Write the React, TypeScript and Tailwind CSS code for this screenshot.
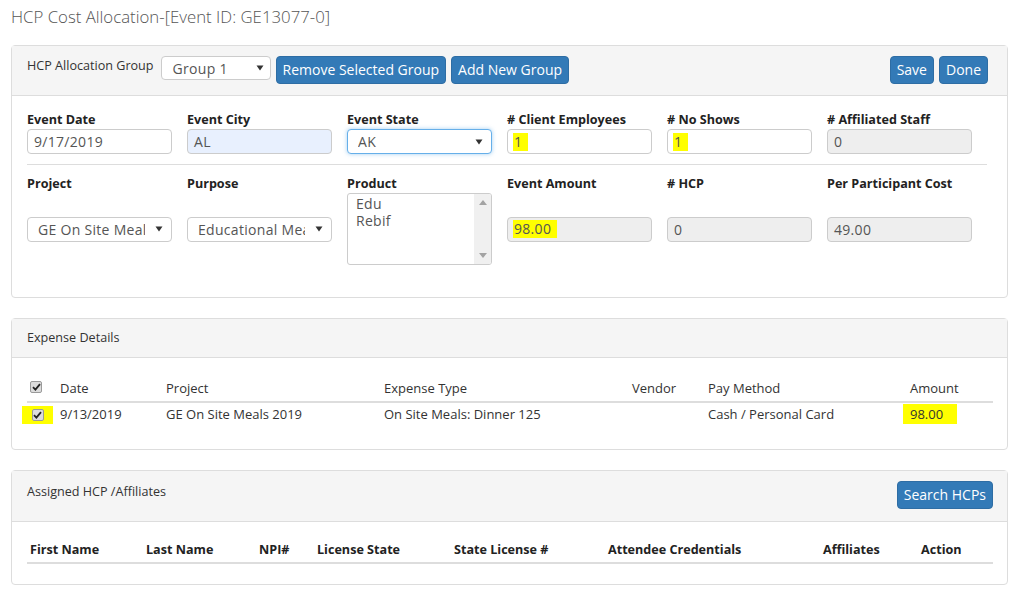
import React from "react";

const Arrow = () => (
  <svg width="8" height="6" viewBox="0 0 8 6" className="shrink-0">
    <path d="M0.5 0.5 L7.5 0.5 L4 5.5 Z" fill="#333" />
  </svg>
);

const Check = ({ hl }: { hl?: boolean }) => (
  <span className={`inline-flex items-center justify-center ${hl ? "bg-[#ffff00] w-[31px] h-[18px]" : ""}`}>
    <span className="w-[12px] h-[12px] border border-[#9a9a9a] rounded-[2px] bg-[#dcdcdc] flex items-center justify-center">
      <svg width="9" height="8" viewBox="0 0 9 8">
        <path d="M1 4.2 L3.4 6.6 L8 1.2" stroke="#222" strokeWidth="1.8" fill="none" />
      </svg>
    </span>
  </span>
);

const Btn = ({ children, className = "" }: { children: React.ReactNode; className?: string }) => (
  <button className={`bg-[#337ab7] border border-[#2e6da4] text-white rounded-[4px] h-[28px] px-[6px] text-[14px] leading-none ${className}`}>
    {children}
  </button>
);

const Label = ({ children }: { children: React.ReactNode }) => (
  <div className="text-[12.6px] font-bold text-[#222] leading-[18px] h-[18px] whitespace-nowrap">{children}</div>
);

const Input = ({ value, variant = "normal", hl }: { value: string; variant?: "normal" | "ro" | "auto"; hl?: boolean }) => {
  const bg = variant === "ro" ? "bg-[#eeeeee]" : variant === "auto" ? "bg-[#e8f0fe]" : "bg-white";
  return (
    <div className={`w-[145px] h-[25px] border border-[#cccccc] rounded-[4px] ${bg} flex items-center px-[6px] text-[14px] tracking-[0.3px] text-[#555]`}>
      {hl ? <span className="bg-[#ffff00] px-[1px] -ml-[1px] h-[18px] leading-[18px] inline-block pr-[6px]">{value}</span> : value}
    </div>
  );
};

const Select = ({ value, focus }: { value: string; focus?: boolean }) => (
  <div
    className={`w-[145px] h-[25px] rounded-[4px] bg-white flex items-center pl-[10px] pr-[8px] text-[14px] tracking-[0.3px] text-[#555] ${
      focus ? "border border-[#66afe9] shadow-[0_0_4px_rgba(102,175,233,0.6)]" : "border border-[#cccccc]"
    }`}
  >
    <span className="flex-1 overflow-hidden whitespace-nowrap mr-[10px]">{value}</span>
    <Arrow />
  </div>
);

export default function App() {
  return (
    <div className="font-['Open_Sans','Noto_Sans',sans-serif] text-[#333] bg-white w-[1019px] h-[603px] overflow-hidden">
      <div className="pl-[11px] pt-[4px] h-[45px]">
        <h1 className="text-[16.8px] font-light text-[#555] leading-[26px]">HCP Cost Allocation-[Event ID: GE13077-0]</h1>
      </div>

      <div className="mx-[11px] w-[997px]">
        {/* Panel 1 */}
        <div className="border border-[#dddddd] rounded-[4px]">
          <div className="bg-[#f5f5f5] border-b border-[#dddddd] h-[50px] pl-[15px] pr-[19px] pt-[10px] flex items-start">
            <span className="text-[12.6px] text-[#333] mt-[1px] leading-[18px]">HCP Allocation Group</span>
            <div className="ml-[7px] w-[110px] h-[24px] border border-[#cccccc] rounded-[4px] bg-white flex items-center pl-[11px] pr-[6px] text-[14px] tracking-[0.3px] text-[#555]">
              <span className="flex-1">Group 1</span>
              <Arrow />
            </div>
            <Btn className="ml-[5px]">Remove Selected Group</Btn>
            <Btn className="ml-[5px]">Add New Group</Btn>
            <div className="flex-1" />
            <Btn>Save</Btn>
            <Btn className="ml-[5px]">Done</Btn>
          </div>
          <div className="px-[15px] pt-[15px] pb-[32px]">
            <div className="grid grid-cols-[160px_160px_160px_160px_160px_160px]">
              <div><Label>Event Date</Label><Input value="9/17/2019" /></div>
              <div><Label>Event City</Label><Input value="AL" variant="auto" /></div>
              <div><Label>Event State</Label><Select value="AK" focus /></div>
              <div><Label># Client Employees</Label><Input value="1" hl /></div>
              <div><Label># No Shows</Label><Input value="1" hl /></div>
              <div><Label># Affiliated Staff</Label><Input value="0" variant="ro" /></div>
            </div>
            <div className="border-t border-[#dddddd] mt-[10px] mb-[10px] w-[960px]" />
            <div className="grid grid-cols-[160px_160px_160px_160px_160px_160px]">
              <div><Label>Project</Label><div className="h-[72px] flex items-center"><Select value="GE On Site Meals 2019" /></div></div>
              <div><Label>Purpose</Label><div className="h-[72px] flex items-center"><Select value="Educational Meals" /></div></div>
              <div>
                <Label>Product</Label>
                <div className="w-[145px] h-[72px] border border-[#cccccc] rounded-[3px] bg-white flex overflow-hidden">
                  <div className="flex-1 pl-[8px] pt-[1px] text-[14px] tracking-[0.3px] text-[#555] leading-[17px]">
                    <div>Edu</div>
                    <div>Rebif</div>
                  </div>
                  <div className="w-[17px] bg-[#f0f0f0] flex flex-col justify-between items-center py-[6px]">
                    <svg width="8" height="5" viewBox="0 0 8 5"><path d="M0 5 L4 0 L8 5 Z" fill="#a3a3a3" /></svg>
                    <svg width="8" height="5" viewBox="0 0 8 5"><path d="M0 0 L4 5 L8 0 Z" fill="#a3a3a3" /></svg>
                  </div>
                </div>
              </div>
              <div><Label>Event Amount</Label><div className="h-[72px] flex items-center"><Input value="98.00" variant="ro" hl /></div></div>
              <div><Label># HCP</Label><div className="h-[72px] flex items-center"><Input value="0" variant="ro" /></div></div>
              <div><Label>Per Participant Cost</Label><div className="h-[72px] flex items-center"><Input value="49.00" variant="ro" /></div></div>
            </div>
          </div>
        </div>

        {/* Panel 2 */}
        <div className="border border-[#dddddd] rounded-[4px] mt-[20px]">
          <div className="bg-[#f5f5f5] border-b border-[#dddddd] h-[39px] pl-[15px] flex items-center">
            <span className="text-[12.6px] text-[#333]">Expense Details</span>
          </div>
          <div className="px-[15px] pt-[21px] pb-[22px]">
            <table className="w-[966px] text-[13px] text-[#333] border-collapse">
              <thead>
                <tr className="border-b-2 border-[#dddddd]">
                  <th className="font-normal text-left w-[33px] pl-[3px] h-[23px] align-top"><span className="relative -top-[2px]"><Check /></span></th>
                  <th className="font-normal text-left w-[106px] align-top">Date</th>
                  <th className="font-normal text-left w-[218px] align-top">Project</th>
                  <th className="font-normal text-left w-[248px] align-top">Expense Type</th>
                  <th className="font-normal text-left w-[76px] align-top">Vendor</th>
                  <th className="font-normal text-left w-[202px] align-top">Pay Method</th>
                  <th className="font-normal text-left align-top">Amount</th>
                </tr>
              </thead>
              <tbody>
                <tr>
                  <td className="h-[25px]"><span className="-ml-[5px] inline-flex"><Check hl /></span></td>
                  <td>9/13/2019</td>
                  <td>GE On Site Meals 2019</td>
                  <td>On Site Meals: Dinner 125</td>
                  <td></td>
                  <td>Cash / Personal Card</td>
                  <td><span className="bg-[#ffff00] -ml-[7px] pl-[7px] pr-[14px] py-[1px]">98.00</span></td>
                </tr>
              </tbody>
            </table>
          </div>
        </div>

        {/* Panel 3 */}
        <div className="border border-[#dddddd] rounded-[4px] mt-[20px]">
          <div className="bg-[#f5f5f5] border-b border-[#dddddd] h-[51px] pl-[15px] pr-[14px] flex items-start">
            <span className="text-[12.6px] text-[#333] mt-[12px]">Assigned HCP /Affiliates</span>
            <div className="flex-1" />
            <Btn className="mt-[10px] h-[27px]">Search HCPs</Btn>
          </div>
          <div className="px-[15px] pt-[19px] pb-[20px]">
            <table className="w-[966px] text-[12.6px] text-[#222] border-collapse">
              <thead>
                <tr className="border-b-2 border-[#dddddd]">
                  <th className="font-bold text-left pl-[3px] w-[119px] h-[22px] align-top">First Name</th>
                  <th className="font-bold text-left w-[113px] align-top">Last Name</th>
                  <th className="font-bold text-left w-[58px] align-top">NPI#</th>
                  <th className="font-bold text-left w-[137px] align-top">License State</th>
                  <th className="font-bold text-left w-[154px] align-top">State License #</th>
                  <th className="font-bold text-left w-[215px] align-top">Attendee Credentials</th>
                  <th className="font-bold text-left w-[98px] align-top">Affiliates</th>
                  <th className="font-bold text-left align-top">Action</th>
                </tr>
              </thead>
            </table>
          </div>
        </div>
      </div>
    </div>
  );
}
